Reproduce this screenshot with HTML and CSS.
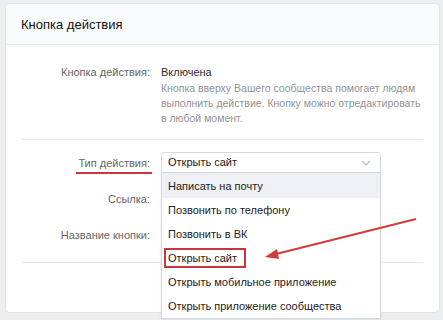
FILE: index.html
```html
<!DOCTYPE html>
<html lang="ru">
<head>
    <meta charset="UTF-8">
    <title>Кнопка действия</title>
    <link rel="stylesheet" href="styles.css">
</head>
<body>
    <div class="card">
        <div class="cardheader">Кнопка действия</div>

        <div class="section">
            <div class="row">
                <div class="label">Кнопка действия:</div>
                <div class="value wide">
                    <div class="status">Включена</div>
                    <div class="hint">Кнопка вверху Вашего сообщества помогает людям<br>выполнить действие. Кнопку можно отредактировать<br>в любой момент.</div>
                </div>
            </div>
        </div>

        <div class="section settings">
            <div class="row field">
                <div class="label"><span class="marked">Тип действия:</span></div>
                <div class="value">
                    <div class="select">
                        <span>Открыть сайт</span>
                        <svg class="chevron" width="10" height="6" viewBox="0 0 10 6"><path d="M1 1l4 4 4-4" fill="none" stroke="#b5bcc4" stroke-width="1.2"/></svg>
                        <div class="options">
                            <div class="option active">Написать на почту</div>
                            <div class="option">Позвонить по телефону</div>
                            <div class="option">Позвонить в ВК</div>
                            <div class="option"><span class="boxed">Открыть сайт</span></div>
                            <div class="option">Открыть мобильное приложение</div>
                            <div class="option">Открыть приложение сообщества</div>
                        </div>
                    </div>
                </div>
            </div>
            <div class="row field">
                <div class="label">Ссылка:</div>
                <div class="value"></div>
            </div>
            <div class="row field">
                <div class="label">Название кнопки:</div>
                <div class="value"></div>
            </div>
        </div>
        <div class="footer"></div>
    </div>

    <!-- annotation arrow -->
    <svg class="arrow" width="443" height="320" viewBox="0 0 443 320">
        <line x1="416" y1="219" x2="276" y2="254" stroke="#d23c3a" stroke-width="2"/>
        <path d="M265 257 L277 249 L279 259 Z" fill="#d23c3a"/>
    </svg>
</body>
</html>
```

FILE: styles.css
```css
body {
    margin: 0;
    padding: 3px 3px 0 5px;
    background-color: #edeef0;
    font-family: "Liberation Sans", Arial, sans-serif;
    position: relative;
    height: 320px;
    box-sizing: border-box;
    overflow: hidden;
}

.card {
    background: white;
    border: 1px solid #e3e5e9;
    border-radius: 5px;
    height: 310px;
    box-sizing: border-box;
}

.cardheader {
    height: 40px;
    line-height: 42px;
    padding-left: 15px;
    font-size: 13px;
    color: #111;
    background: #fafbfc;
    border-bottom: 1px solid #e7e8ec;
    border-radius: 5px 5px 0 0;
}

.section {
    margin: 0 16px;
    padding: 19px 0 13px;
    border-bottom: 1px solid #e7e8ec;
}

.settings {
    padding: 12px 0 17px;
}

.row {
    display: flex;
    gap: 11px;
    margin-left: -16px;
}

.field {
    height: 21px;
    align-items: center;
    margin-bottom: 15px;
}

.field:last-child {
    margin-bottom: 0;
}

.label {
    width: 144px;
    flex: none;
    text-align: right;
    font-size: 11px;
    line-height: 16px;
    color: #656565;
}

.marked {
    display: inline-block;
    border-bottom: 2px solid #c8353a;
    padding: 0 2px 1px 2px;
    margin-right: -2px;
    position: relative;
    top: 2px;
}

.value {
    width: 220px;
    font-size: 11px;
    line-height: 16px;
}

.value.wide {
    width: 262px;
}

.status {
    color: #2b2b2b;
}

.hint {
    color: #939393;
    font-size: 10.5px;
    line-height: 15px;
    padding-top: 1px;
    white-space: nowrap;
}

.select {
    position: relative;
    height: 21px;
    box-sizing: border-box;
    border: 1px solid #d3d9de;
    border-radius: 3px 3px 0 0;
    padding-left: 6px;
    line-height: 19px;
    font-size: 11px;
    color: #222;
}

.chevron {
    position: absolute;
    right: 9px;
    top: 7px;
}

.options {
    position: absolute;
    top: 20px;
    left: -1px;
    width: 220px;
    background: white;
    border: 1px solid #d3d9de;
    border-top: none;
    box-sizing: border-box;
    box-shadow: 0 1px 3px rgba(0, 0, 0, 0.08);
}

.option {
    height: 24px;
    line-height: 24px;
    padding-left: 6px;
    color: #222;
}

.option.active {
    background: #eef0f3;
    height: 25px;
    line-height: 26px;
}

.boxed {
    display: inline-block;
    line-height: 14px;
    padding: 1px 7px 1px 2px;
    margin-left: -4px;
    border: 2px solid #c8353a;
}

.footer {
    height: 50px;
}

.arrow {
    position: absolute;
    left: 0;
    top: 0;
}
```
